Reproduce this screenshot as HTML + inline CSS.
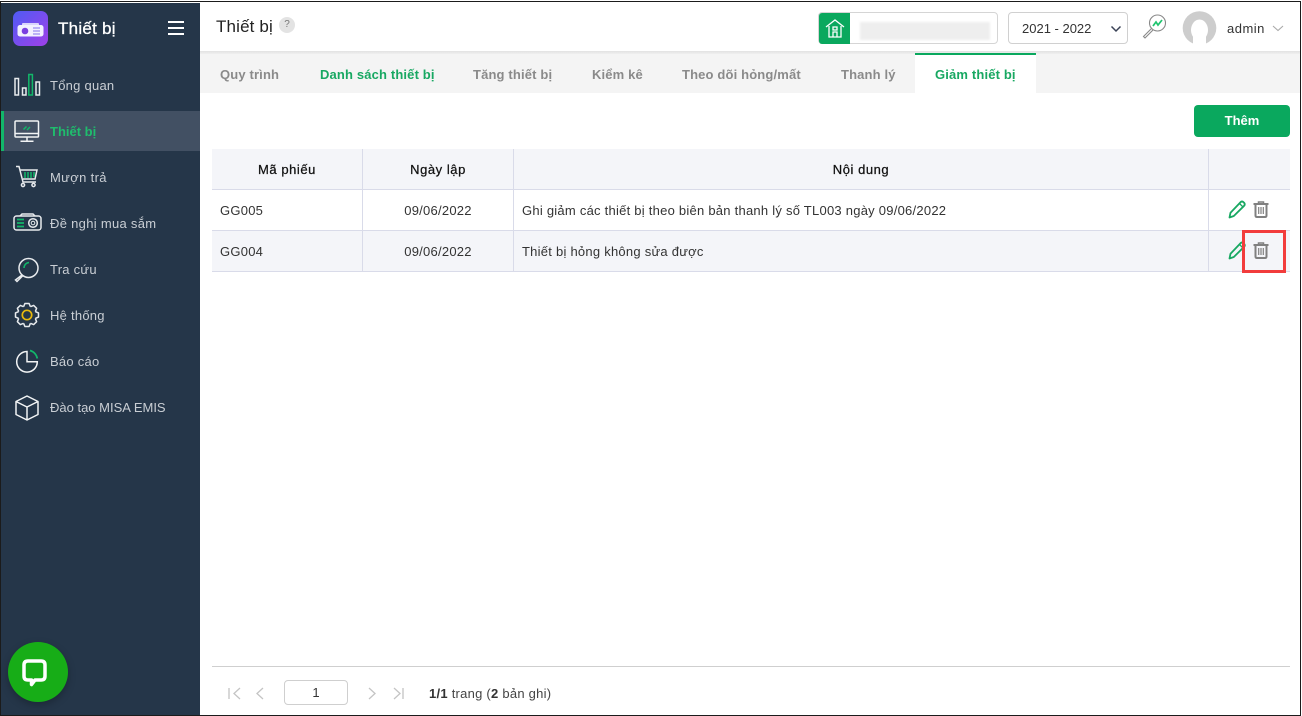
<!DOCTYPE html>
<html lang="vi"><head><meta charset="utf-8"><title>Thiết bị</title>
<style>
*{box-sizing:border-box}
html,body{margin:0;padding:0}
body{width:1302px;height:716px;position:relative;overflow:hidden;background:#fff;font-family:"Liberation Sans","Noto Sans CJK JP",sans-serif;font-size:13px;color:#212121}
.a{position:absolute;white-space:nowrap}
.nav{position:absolute;left:50px;color:#c9ced4;font-size:13px;line-height:18px;white-space:nowrap;letter-spacing:.25px}
.tab{position:absolute;top:66px;line-height:18px;font-size:13px;font-weight:700;color:#8a8a8a;white-space:nowrap;letter-spacing:.15px}
.th{position:absolute;top:161px;line-height:18px;font-size:13px;color:#111;text-align:center;-webkit-text-stroke:.25px #111;letter-spacing:.55px}
.td{position:absolute;line-height:18px;font-size:13px;color:#333;white-space:nowrap;letter-spacing:.245px}
svg{position:absolute;overflow:visible}
</style></head><body>
<!-- frame -->
<div class="a" style="left:0;top:1px;width:1301px;height:1px;background:#1b1b1b"></div>
<div class="a" style="left:0;top:1px;width:1px;height:715px;background:#1b1b1b"></div>
<div class="a" style="left:1300px;top:1px;width:1px;height:715px;background:#1b1b1b"></div>
<div class="a" style="left:0;top:715px;width:1301px;height:1px;background:#1b1b1b"></div>
<!-- sidebar -->
<div class="a" style="left:1px;top:3px;width:199px;height:712px;background:#253649"></div>
<div class="a" style="left:1px;top:111px;width:199px;height:40px;background:#425063"></div>
<div class="a" style="left:1px;top:111px;width:3px;height:40px;background:#12b76a"></div>
<!-- logo -->
<svg style="left:13px;top:11px" width="35" height="35" viewBox="0 0 35 35">
<defs><linearGradient id="g" x1="0" y1="0" x2="1" y2="1"><stop offset="0" stop-color="#4f5bf5"/><stop offset="1" stop-color="#a040e8"/></linearGradient></defs>
<rect width="35" height="35" rx="7" fill="url(#g)"/>
<path d="M9 13q0-1 1-1h15q1 0 1 1v1H9z" fill="#d9d4fb"/>
<rect x="4.500" y="14" width="26" height="11.500" rx="2.500" fill="#f2f0ff"/>
<circle cx="12" cy="20" r="3.300" fill="#7a3fe0"/>
<path d="M20 17h7M20 20h7M20 23h7" stroke="#9a8df0" stroke-width="1.300"/>
</svg>
<div class="a" style="left:58px;top:18px;font-size:17px;line-height:22px;color:#fff;-webkit-text-stroke:.3px #fff;letter-spacing:.25px">Thiết bị</div>
<div class="a" style="left:168px;top:21px;width:16px;height:2px;background:#fff"></div>
<div class="a" style="left:168px;top:27px;width:16px;height:2px;background:#fff"></div>
<div class="a" style="left:168px;top:33px;width:16px;height:2px;background:#fff"></div>
<!-- nav icons -->
<svg style="left:0;top:0" width="200" height="430" viewBox="0 0 200 430" fill="none" stroke-width="1.500">
<g stroke="#e8ebee"><rect x="15" y="78.500" width="3.500" height="16.500"/><rect x="22.500" y="88" width="3.500" height="7"/><rect x="36" y="82" width="3.500" height="13"/></g>
<rect x="28.800" y="74.500" width="3.600" height="20.500" stroke="#12b76a"/>
<g stroke="#f2f4f5"><rect x="15" y="121" width="23.500" height="16" rx="1"/><path d="M15 133.500h23.500M27 137v3.500M20.500 141.300h13"/></g>
<path d="M23.500 129.500l3-3M27 130l3-3" stroke="#12b76a"/>
<g stroke="#e8ebee"><path d="M16 166.500h3l4 15.500h13M20.500 170h16.500l-2 9H23"/><circle cx="23" cy="185" r="1.600"/><circle cx="33.500" cy="185" r="1.600"/></g>
<path d="M25 172v6M28 172v6M31 172v6M34 172v5" stroke="#12b76a"/>
<g stroke="#e8ebee"><rect x="14" y="216" width="27" height="14" rx="2.500"/><path d="M20 216l2-2h11l2 2"/><circle cx="33" cy="223" r="4.300"/></g>
<circle cx="33" cy="223" r="1.800" stroke="#e8ebee" stroke-width="1"/>
<path d="M17 219.500h7M17 223h7M17 226.500h7" stroke="#12b76a" stroke-width="1.700"/>
<g stroke="#e8ebee"><circle cx="28.500" cy="268" r="9.500"/><path d="M22 275l-6.500 5 1.500 1.500 6-6"/></g>
<path d="M24 268a5.500 5.500 0 0 1 5-5.500" stroke="#12b76a"/>
<g stroke="#e8ebee" stroke-linejoin="round" transform="translate(27 315)">
<path d="M-3.440-8.310L-2.080-11.500H2.080L3.440-8.310"/>
<path d="M-3.440-8.310L-2.080-11.500H2.080L3.440-8.310" transform="rotate(45)"/>
<path d="M-3.440-8.310L-2.080-11.500H2.080L3.440-8.310" transform="rotate(90)"/>
<path d="M-3.440-8.310L-2.080-11.500H2.080L3.440-8.310" transform="rotate(135)"/>
<path d="M-3.440-8.310L-2.080-11.500H2.080L3.440-8.310" transform="rotate(180)"/>
<path d="M-3.440-8.310L-2.080-11.500H2.080L3.440-8.310" transform="rotate(225)"/>
<path d="M-3.440-8.310L-2.080-11.500H2.080L3.440-8.310" transform="rotate(270)"/>
<path d="M-3.440-8.310L-2.080-11.500H2.080L3.440-8.310" transform="rotate(315)"/>
</g>
<circle cx="27" cy="315" r="4.700" stroke="#e8b90e" stroke-width="1.700"/>
<path d="M27 351.500a10.300 10.300 0 1 0 10.300 10.300H27z" stroke="#f2f4f5"/>
<path d="M30 350.500a10 10 0 0 1 7.300 8" stroke="#12b76a" stroke-width="1.700"/>
<path d="M27 396l11 5.500v13L27 420l-11-5.500v-13zM16 401.500l11 5.500 11-5.500M27 407v13" stroke="#f2f4f5" stroke-linejoin="round"/>
</svg>
<div class="nav" style="top:77px">Tổng quan</div>
<div class="nav" style="top:123px;color:#1fbd6d;font-weight:700;letter-spacing:0">Thiết bị</div>
<div class="nav" style="top:169px;letter-spacing:.35px">Mượn trả</div>
<div class="nav" style="top:215px;letter-spacing:.3px">Đề nghị mua sắm</div>
<div class="nav" style="top:261px">Tra cứu</div>
<div class="nav" style="top:307px">Hệ thống</div>
<div class="nav" style="top:353px">Báo cáo</div>
<div class="nav" style="top:399px;letter-spacing:0">Đào tạo MISA EMIS</div>
<!-- chat -->
<div class="a" style="left:8px;top:642px;width:60px;height:60px;border-radius:50%;background:#17ad17;box-shadow:0 3px 8px rgba(0,0,0,.25)"></div>
<svg style="left:0;top:0" width="80" height="716" viewBox="0 0 80 716" fill="none"><path d="M28 661h13q4 0 4 4v11q0 4-4 4h-6l-3.500 4.500V680H28q-4 0-4-4v-11q0-4 4-4z" stroke="#fff" stroke-width="3.500" stroke-linejoin="round"/></svg>
<!-- header -->
<div class="a" style="left:200px;top:51px;width:1100px;height:3px;background:linear-gradient(#e2e2e2,#efefef)"></div>
<div class="a" style="left:216px;top:16px;font-size:17px;line-height:22px;color:#222;letter-spacing:.15px">Thiết bị</div>
<div class="a" style="left:279px;top:17px;width:16px;height:16px;border-radius:50%;background:#e3e3e3;color:#777;font-size:10px;line-height:16px;text-align:center">?</div>
<div class="a" style="left:818px;top:12px;width:180px;height:32px;border:1px solid #d5d5d5;border-radius:4px"></div>
<div class="a" style="left:819px;top:13px;width:31px;height:31px;background:#0aa85e;border-radius:3px 0 0 3px"></div>
<svg style="left:825px;top:18px" width="20" height="21" viewBox="0 0 20 21" fill="none" stroke="#fff" stroke-width="1.300"><path d="M1 9l9-7 9 7M4 8v11h12V8M8 19v-5h4v5M8 9h4v3H8z"/></svg>
<div class="a" style="left:860px;top:22px;width:130px;height:18px;background:#eeeeee;filter:blur(1px)"></div>
<div class="a" style="left:1008px;top:12px;width:120px;height:32px;border:1px solid #d0d0d0;border-radius:4px"></div>
<div class="a" style="left:1022px;top:20px;font-size:13px;line-height:18px;color:#333">2021 - 2022</div>
<svg style="left:1110px;top:25px" width="12" height="8" viewBox="0 0 12 8" fill="none"><path d="M1.500 1.500L6 6l4.500-4.500" stroke="#3a4256" stroke-width="1.500"/></svg>
<svg style="left:1142px;top:14px" width="26" height="26" viewBox="0 0 26 26" fill="none" stroke="#888" stroke-width="1.100"><circle cx="15.500" cy="9" r="8"/><path d="M9.500 14.500l-8 8 1.500 1.500 8-8"/><path d="M11 12l3-4 2 3 4-5" stroke="#1fc46f" stroke-width="1.700"/></svg>
<svg style="left:1180px;top:8px" width="40" height="40" viewBox="0 0 40 40"><circle cx="19.500" cy="20" r="16.800" fill="#cdcdcd"/><ellipse cx="19.500" cy="22" rx="8.500" ry="10.500" fill="#fff"/><rect x="13" y="26" width="13" height="12" fill="#fff"/></svg>
<div class="a" style="left:1227px;top:20px;font-size:13px;line-height:18px;color:#333;letter-spacing:.5px">admin</div>
<svg style="left:1272px;top:25px" width="12" height="7" viewBox="0 0 12 7" fill="none"><path d="M1 1l5 4.500L11 1" stroke="#aaa" stroke-width="1.100"/></svg>
<!-- tabs -->
<div class="a" style="left:200px;top:54px;width:1100px;height:39px;background:#f4f4f4"></div>
<div class="a" style="left:915px;top:53px;width:121px;height:40px;background:#fff;border-top:2px solid #0aa85e"></div>
<div class="tab" style="left:220px">Quy trình</div>
<div class="tab" style="left:320px;color:#18a862">Danh sách thiết bị</div>
<div class="tab" style="left:473px">Tăng thiết bị</div>
<div class="tab" style="left:592px">Kiểm kê</div>
<div class="tab" style="left:682px">Theo dõi hỏng/mất</div>
<div class="tab" style="left:841px">Thanh lý</div>
<div class="tab" style="left:935px;color:#18a862">Giảm thiết bị</div>
<div class="a" style="left:1194px;top:105px;width:96px;height:32px;background:#0aa85e;border-radius:4px;color:#fff;font-weight:700;text-align:center;line-height:32px;font-size:13px">Thêm</div>
<!-- table -->
<div class="a" style="left:212px;top:149px;width:1078px;height:40px;background:#f4f5f9"></div>
<div class="a" style="left:212px;top:231px;width:1078px;height:40px;background:#f4f5f9"></div>
<div class="a" style="left:212px;top:189px;width:1078px;height:1px;background:#d9dbe9"></div>
<div class="a" style="left:212px;top:230px;width:1078px;height:1px;background:#d9dbe9"></div>
<div class="a" style="left:212px;top:271px;width:1078px;height:1px;background:#d9dbe9"></div>
<div class="a" style="left:362px;top:149px;width:1px;height:122px;background:#d9dbe9"></div>
<div class="a" style="left:513px;top:149px;width:1px;height:122px;background:#d9dbe9"></div>
<div class="a" style="left:1208px;top:149px;width:1px;height:122px;background:#d9dbe9"></div>
<div class="th" style="left:212px;width:150px">Mã phiếu</div>
<div class="th" style="left:363px;width:150px">Ngày lập</div>
<div class="th" style="left:514px;width:694px">Nội dung</div>
<div class="td" style="left:220px;top:202px">GG005</div>
<div class="td" style="left:363px;width:150px;text-align:center;top:202px">09/06/2022</div>
<div class="td" style="left:522px;top:202px">Ghi giảm các thiết bị theo biên bản thanh lý số TL003 ngày 09/06/2022</div>
<div class="td" style="left:220px;top:243px">GG004</div>
<div class="td" style="left:363px;width:150px;text-align:center;top:243px">09/06/2022</div>
<div class="td" style="left:522px;top:243px">Thiết bị hỏng không sửa được</div>
<!-- row icons -->
<svg style="left:0;top:0" width="1302" height="300" viewBox="0 0 1302 300" fill="none">
<defs>
<g id="p"><path d="M1.500 18l1-4.800L12.500 2.700q1.500-1.400 3 0l.6.6q1.400 1.500 0 3L5.800 16.500z" stroke="#18a862" stroke-width="1.800" stroke-linejoin="round"/><path d="M11.500 4l3.700 3.700" stroke="#18a862" stroke-width="1.300"/></g>
<g id="t"><path d="M0 3h15" stroke="#808080" stroke-width="2"/><path d="M5 2.500V1h5v1.500" stroke="#808080" stroke-width="1.500"/><path d="M2 4v10.500q0 1.500 1.500 1.500h8q1.500 0 1.500-1.500V4" stroke="#808080" stroke-width="2"/><path d="M5.200 6v7M7.500 6v7M9.800 6v7" stroke="#808080" stroke-width="1.200"/></g>
</defs>
<use href="#p" x="1228" y="199.500"/><use href="#t" x="1253.500" y="201"/>
<use href="#p" x="1228" y="240.500"/><use href="#t" x="1253.500" y="242"/>
<rect x="1243.500" y="231.500" width="41" height="40" stroke="#f23c3c" stroke-width="3"/>
</svg>
<!-- pager -->
<div class="a" style="left:212px;top:666px;width:1078px;height:1px;background:#cfcfcf"></div>
<svg style="left:0;top:680px" width="420" height="28" viewBox="0 0 420 28" fill="none" stroke="#c4c4c4" stroke-width="1.300"><path d="M229 8v11M240 8l-6 5.500 6 5.500M263 8l-6 5.500 6 5.500M369 8l6 5.500-6 5.500M394 8l6 5.500-6 5.500M403 8v11"/></svg>
<div class="a" style="left:284px;top:680px;width:64px;height:25px;border:1px solid #cfcfcf;border-radius:4px;text-align:center;line-height:24px;font-size:13px;color:#333">1</div>
<div class="a" style="left:429px;top:685px;font-size:13px;line-height:18px;color:#444;letter-spacing:.25px"><b style="color:#333">1/1</b> trang (<b style="color:#333">2</b> bản ghi)</div>
</body></html>
